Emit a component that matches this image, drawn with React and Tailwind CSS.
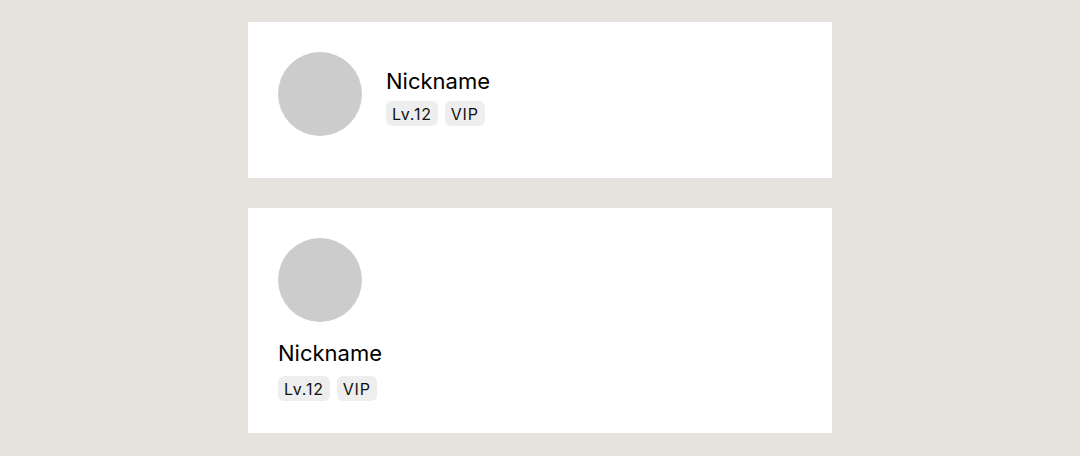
import React from "react";

const Badge = ({ children }) => (
  <span className="px-[6px] h-[25px] flex items-center rounded-md bg-[#eeeeee] text-[16px] tracking-[0.8px] text-[#111]">
    {children}
  </span>
);

const Info = ({ gap }) => (
  <div>
    <div className="text-[22px] leading-[28px] text-black">Nickname</div>
    <div className={`flex gap-[7px] ${gap}`}>
      <Badge>Lv.12</Badge>
      <Badge>VIP</Badge>
    </div>
  </div>
);

export default function App() {
  return (
    <div className="min-h-screen bg-[#e6e2dd] pt-[22px] pb-[23px] font-['Inter',sans-serif]">
      <div className="w-[584px] mx-auto flex flex-col gap-[30px]">
        <div className="bg-white h-[156px] p-[30px] flex items-start gap-6">
          <div className="w-[84px] h-[84px] rounded-full bg-[#cccccc] shrink-0" />
          <div className="pt-[15px]">
            <Info gap="mt-[6px]" />
          </div>
        </div>
        <div className="bg-white pt-[30px] px-[30px] pb-[32px] flex flex-col gap-[17px]">
          <div className="w-[84px] h-[84px] rounded-full bg-[#cccccc]" />
          <Info gap="mt-[9px]" />
        </div>
      </div>
    </div>
  );
}
